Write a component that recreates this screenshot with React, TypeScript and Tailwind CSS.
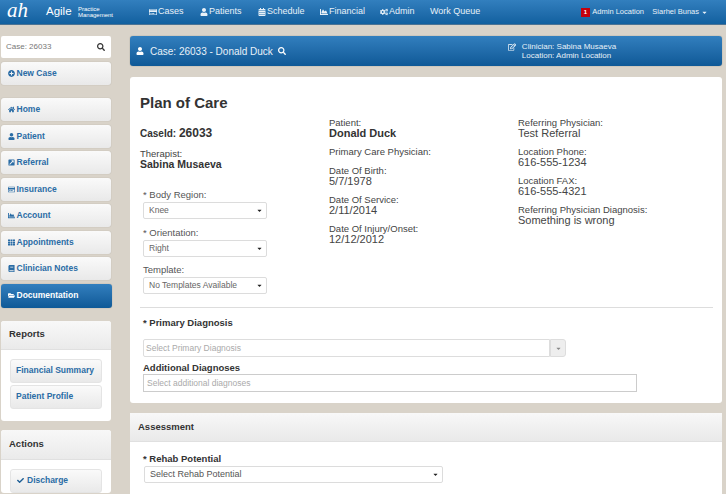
import { FaUser, FaSearch, FaPlusCircle, FaHome, FaExternalLinkSquareAlt, FaRegEdit, FaCogs, FaTh, FaBook, FaFolderOpen, FaCheck, FaCaretDown, FaRegCreditCard, FaChartArea, FaCalendarAlt } from "react-icons/fa"
import type { ReactNode } from "react"

const sideItems: { label: string; icon: ReactNode; active?: boolean }[] = [
    { label: "Home", icon: <FaHome /> },
    { label: "Patient", icon: <FaUser /> },
    { label: "Referral", icon: <FaExternalLinkSquareAlt /> },
    { label: "Insurance", icon: <FaRegCreditCard /> },
    { label: "Account", icon: <FaChartArea /> },
    { label: "Appointments", icon: <FaTh /> },
    { label: "Clinician Notes", icon: <FaBook /> },
    { label: "Documentation", icon: <FaFolderOpen />, active: true },
]

const topNav: { label: string; icon?: ReactNode; width: string }[] = [
    { label: "Cases", icon: <FaRegCreditCard />, width: "w-[51px]" },
    { label: "Patients", icon: <FaUser />, width: "w-[58px]" },
    { label: "Schedule", icon: <FaCalendarAlt />, width: "w-[62px]" },
    { label: "Financial", icon: <FaChartArea />, width: "w-[60px]" },
    { label: "Admin", icon: <FaCogs />, width: "w-[49px]" },
    { label: "Work Queue", width: "w-[60px]" },
]

const SideButton = ({ label, icon, active }: { label: string; icon: ReactNode; active?: boolean }) => (
    <div
        className={
            active
                ? "h-[24px] w-[111px] rounded-[3px] bg-gradient-to-b from-[#327fbe] to-[#0e5997] pl-[7px] flex items-center gap-[1px] text-[8.5px] font-bold text-white shadow-[0_0_1px_rgba(0,0,0,0.4)]"
                : "h-[23px] w-[110px] rounded-[3px] bg-gradient-to-b from-[#fafafa] to-[#e9e9e9] pl-[7px] flex items-center gap-[1px] text-[8.5px] font-bold text-[#2a6ca5] shadow-[0_0_1px_rgba(0,0,0,0.3)]"
        }
    >
        <span className="w-[7px] text-[7px] shrink-0">{icon}</span>
        <span className="pl-[0.5px]">{label}</span>
    </div>
)

const SelectBox = ({ value, className }: { value: string; className: string }) => (
    <div className={`h-[17px] rounded-[2px] border border-[#dcdcdc] bg-white flex items-center justify-between text-[8.5px] text-[#666] ${className}`}>
        <span>{value}</span>
        <FaCaretDown className="text-[7px] text-[#222]" />
    </div>
)

const Info = ({ label, value, bold }: { label: string; value?: string; bold?: boolean }) => (
    <div className="text-[#444] leading-[10px]">
        <div className="text-[9.5px]">{label}</div>
        {value && <div className={bold ? "text-[11px] font-bold text-[#333]" : "text-[11px]"}>{value}</div>}
    </div>
)

export default function App() {
    return (
        <div className="h-[494px] w-[726px] overflow-hidden bg-[#d9d3c9]" style={{ fontFamily: '"Liberation Sans", Arial, sans-serif' }}>
            {/* Top bar */}
            <header className="h-[25px] flex items-center bg-gradient-to-b from-[#327fbe] to-[#11609f] border-b border-[#4b7394] text-white">
                <div className="w-[46px] pl-[7px] text-[21px] italic leading-none -mt-[3px]" style={{ fontFamily: '"Liberation Serif", serif' }}>
                    ah
                </div>
                <div className="text-[11.5px] w-[32px]">Agile</div>
                <div className="w-[71px] text-[6px] leading-[6.5px]">
                    <div>Practice</div>
                    <div>Management</div>
                </div>
                <nav className="flex items-center">
                    {topNav.map((n) => (
                        <div key={n.label} className={`flex items-center gap-[1px] text-[9px] whitespace-nowrap text-[#e8f1f8] ${n.width}`}>
                            {n.icon && <span className="text-[8px] shrink-0">{n.icon}</span>}
                            <span className={n.icon ? "" : "pl-[1px]"}>{n.label}</span>
                        </div>
                    ))}
                </nav>
                <div className="ml-auto flex items-center text-[7.5px] text-[#e8f1f8]">
                    <span className="w-[9px] h-[9px] bg-[#c5000b] text-white text-[6px] font-bold flex items-center justify-center">1</span>
                    <span className="ml-[2.5px] w-[62px]">Admin Location</span>
                    <span className="ml-[-2px]">Siarhei Bunas</span>
                    <FaCaretDown className="text-[7px] ml-[2px] mr-[18px]" />
                </div>
            </header>

            <div className="flex pt-[11px]">
                {/* Sidebar */}
                <aside className="w-[130px] pl-[1px] shrink-0">
                    <div className="h-[22px] w-[110px] rounded-[2px] bg-white flex items-center justify-between pl-[5px] pr-[6px] text-[8px] text-[#777]">
                        <span>Case: 26033</span>
                        <FaSearch className="text-[8px] text-[#333]" />
                    </div>
                    <div className="mt-[4px]">
                        <SideButton label="New Case" icon={<FaPlusCircle />} />
                    </div>
                    <div className="mt-[13px] flex flex-col gap-[3.5px]">
                        {sideItems.map((s) => (
                            <SideButton key={s.label} {...s} />
                        ))}
                    </div>
                    <div className="mt-[13px] w-[110px] rounded-[3px] bg-white overflow-hidden">
                        <div className="h-[29px] pl-[8px] flex items-center bg-gradient-to-b from-[#f8f8f8] to-[#eaeaea] border-b border-[#e0e0e0] text-[9.5px] font-bold text-[#333]">
                            Reports
                        </div>
                        <div className="px-[9px] pt-[9px] pb-[12px] flex flex-col gap-[2px]">
                            <div className="h-[24px] rounded-[3px] bg-gradient-to-b from-[#fafafa] to-[#e9e9e9] border border-[#e4e4e4] pl-[5px] flex items-center text-[8.5px] font-bold text-[#2a6ca5]">
                                Financial Summary
                            </div>
                            <div className="h-[24px] rounded-[3px] bg-gradient-to-b from-[#fafafa] to-[#e9e9e9] border border-[#e4e4e4] pl-[5px] flex items-center text-[8.5px] font-bold text-[#2a6ca5]">
                                Patient Profile
                            </div>
                        </div>
                    </div>
                    <div className="mt-[9px] w-[110px] rounded-[3px] bg-white overflow-hidden">
                        <div className="h-[30px] pl-[8px] flex items-center bg-gradient-to-b from-[#f8f8f8] to-[#eaeaea] border-b border-[#e0e0e0] text-[9.5px] font-bold text-[#333]">
                            Actions
                        </div>
                        <div className="px-[9px] pt-[9px]">
                            <div className="h-[24px] rounded-[3px] bg-gradient-to-b from-[#fafafa] to-[#e9e9e9] border border-[#e4e4e4] pl-[6px] flex items-center gap-[3px] text-[8.5px] font-bold text-[#2a6ca5]">
                                <FaCheck className="text-[7px] text-[#1e5f96]" />
                                Discharge
                            </div>
                        </div>
                    </div>
                </aside>

                {/* Main */}
                <main className="w-[592px] shrink-0">
                    <div className="h-[30px] rounded-[3px] bg-gradient-to-b from-[#327fbe] to-[#0e5997] shadow-[0_0_1px_rgba(0,0,0,0.5)] flex items-center text-white pl-[6px]">
                        <FaUser className="text-[8px]" />
                        <span className="ml-[6px] text-[10px] text-[#e8f1f8]">Case: 26033 - Donald Duck</span>
                        <FaSearch className="ml-[5px] text-[8px]" />
                        <FaRegEdit className="ml-[222px] mb-[9px] text-[8px]" />
                        <div className="ml-[6px] text-[8px] leading-[9px] text-[#e8f1f8]">
                            <div>Clinician: Sabina Musaeva</div>
                            <div>Location: Admin Location</div>
                        </div>
                    </div>

                    <section className="mt-[11px] h-[326px] rounded-[3px] bg-white pl-[10px] pr-[9px]">
                        <div className="flex h-[230px]">
                            <div className="w-[189px]">
                                <h1 className="pt-[17px] text-[15px] leading-[18px] font-bold text-[#333]">Plan of Care</h1>
                                <div className="mt-[15px] text-[10px] leading-[12px] font-bold text-[#333]">
                                    CaseId: <span className="text-[12px]">26033</span>
                                </div>
                                <div className="mt-[9px] leading-[10px]">
                                    <div className="text-[9.5px] text-[#444]">Therapist:</div>
                                    <div className="text-[10.5px] font-bold text-[#333]">Sabina Musaeva</div>
                                </div>
                                <div className="mt-[20px] pl-[3px] text-[9.5px] leading-[11px] text-[#555]">
                                    <div>* Body Region:</div>
                                    <SelectBox value="Knee" className="w-[124px] mt-[2px] pl-[5px] pr-[3px]" />
                                    <div className="mt-[8px]">* Orientation:</div>
                                    <SelectBox value="Right" className="w-[124px] mt-[2px] pl-[5px] pr-[3px]" />
                                    <div className="mt-[7px]">Template:</div>
                                    <SelectBox value="No Templates Available" className="w-[124px] mt-[2px] pl-[5px] pr-[3px]" />
                                </div>
                            </div>
                            <div className="w-[189px] pt-[41px] flex flex-col gap-[9px]">
                                <Info label="Patient:" value="Donald Duck" bold />
                                <Info label="Primary Care Physician:" />
                                <Info label="Date Of Birth:" value="5/7/1978" />
                                <Info label="Date Of Service:" value="2/11/2014" />
                                <Info label="Date Of Injury/Onset:" value="12/12/2012" />
                            </div>
                            <div className="pt-[41px] flex flex-col gap-[9px]">
                                <Info label="Referring Physician:" value="Test Referral" />
                                <Info label="Location Phone:" value="616-555-1234" />
                                <Info label="Location FAX:" value="616-555-4321" />
                                <Info label="Referring Physician Diagnosis:" value="Something is wrong" />
                            </div>
                        </div>
                        <hr className="border-0 h-[1px] bg-[#ddd]" />
                        <div className="pl-[3px] pt-[9px] text-[9.5px] leading-[11px] font-bold text-[#333]">* Primary Diagnosis</div>
                        <div className="mt-[11px] ml-[3px] flex w-[423px] h-[18px]">
                            <div className="flex-1 rounded-l-[2px] border border-[#ddd] pl-[2px] flex items-center text-[8.5px] text-[#aaa]">Select Primary Diagnosis</div>
                            <div className="w-[16px] rounded-r-[3px] border border-[#ddd] bg-[#eee] flex items-center justify-center">
                                <FaCaretDown className="text-[7px] text-[#888]" />
                            </div>
                        </div>
                        <div className="ml-[3px] mt-[5px] text-[9.5px] leading-[11px] font-bold text-[#333]">Additional Diagnoses</div>
                        <div className="ml-[3px] mt-[1px] w-[494px] h-[18px] border border-[#ccc] pl-[3px] flex items-center text-[8.5px] text-[#aaa]">Select additional diagnoses</div>
                    </section>

                    <section className="mt-[10px] h-[120px] rounded-[3px] bg-white">
                        <div className="h-[29px] pl-[8px] flex items-center bg-gradient-to-b from-[#f8f8f8] to-[#e9e9e9] border-b border-[#e0e0e0] text-[9.5px] font-bold text-[#333]">
                            Assessment
                        </div>
                        <div className="pl-[13px] pt-[11px] text-[9.5px] leading-[11px] font-bold text-[#333]">* Rehab Potential</div>
                        <SelectBox value="Select Rehab Potential" className="ml-[14px] mt-[2px] w-[299px] pl-[5px] pr-[3px] !text-[#555] !text-[9px]" />
                    </section>
                </main>
            </div>
        </div>
    )
}
